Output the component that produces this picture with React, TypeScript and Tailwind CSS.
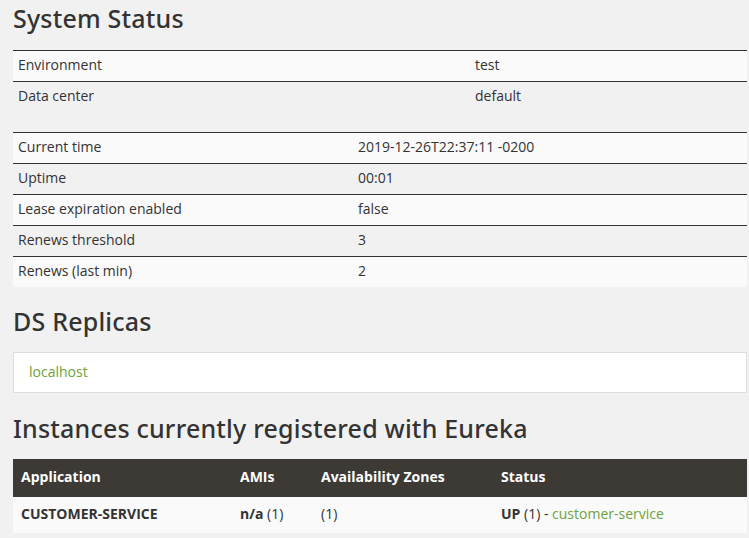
import React from "react";

const body = { fontFamily: '"Open Sans", "Liberation Sans", sans-serif' };
const head = { fontFamily: '"Noto Sans", "Open Sans", sans-serif' };

function KVTable({ rows, firstCol }: { rows: [string, string][]; firstCol: string }) {
  return (
    <div className="flex flex-col">
      {rows.map(([k, v], i) => (
        <div
          key={k}
          className={`flex h-[31px] items-center border-t border-[#333] pb-[3px] ${i % 2 === 0 ? "bg-[#fafafa]" : "bg-[#f1f1f1]"}`}
        >
          <div className={`${firstCol} shrink-0 pl-[5px]`}>{k}</div>
          <div className="pl-[5px]">{v}</div>
        </div>
      ))}
    </div>
  );
}

export default function App() {
  return (
    <div className="min-h-[538px] w-full bg-[#f1f1f1] pl-[13px] pr-[2px] text-[14px] text-[#333]" style={body}>
      <div className="flex h-[38px] items-center text-[25px] font-medium tracking-[0.2px] text-[#333]" style={head}>
        System Status
      </div>
      <div className="mt-[12px]">
        <KVTable
          firstCol="w-[457px]"
          rows={[
            ["Environment", "test"],
            ["Data center", "default"],
          ]}
        />
      </div>
      <div className="mt-[20px]">
        <KVTable
          firstCol="w-[340px]"
          rows={[
            ["Current time", "2019-12-26T22:37:11 -0200"],
            ["Uptime", "00:01"],
            ["Lease expiration enabled", "false"],
            ["Renews threshold", "3"],
            ["Renews (last min)", "2"],
          ]}
        />
      </div>
      <div className="mt-[15px] flex h-[40px] items-center text-[25px] font-medium tracking-[0.2px] text-[#333]" style={head}>
        DS Replicas
      </div>
      <div className="mt-[10px] flex h-[41px] items-center border border-[#ddd] bg-white pb-[2px] pl-[15px]">
        <span className="text-[#6ea23d]">localhost</span>
      </div>
      <div className="mt-[16px] flex h-[40px] items-center text-[25px] font-medium tracking-[0.2px] text-[#333]" style={head}>
        Instances currently registered with Eureka
      </div>
      <div className="mt-[10px] flex flex-col">
        <div className="flex h-[38px] items-center bg-[#3d3934] pb-[4px] font-bold text-white">
          <div className="w-[219px] shrink-0 pl-[8px]">Application</div>
          <div className="w-[81px] shrink-0 pl-[8px]">AMIs</div>
          <div className="w-[180px] shrink-0 pl-[8px]">Availability Zones</div>
          <div className="pl-[8px]">Status</div>
        </div>
        <div className="flex h-[36px] items-center bg-[#fafafa] pb-[4px]">
          <div className="w-[219px] shrink-0 pl-[8px] font-bold">CUSTOMER-SERVICE</div>
          <div className="w-[81px] shrink-0 pl-[8px]">
            <b>n/a</b> (1)
          </div>
          <div className="w-[180px] shrink-0 pl-[8px]">(1)</div>
          <div className="pl-[8px]">
            <b>UP</b> (1) - <span className="text-[#6ea23d]">customer-service</span>
          </div>
        </div>
      </div>
    </div>
  );
}
